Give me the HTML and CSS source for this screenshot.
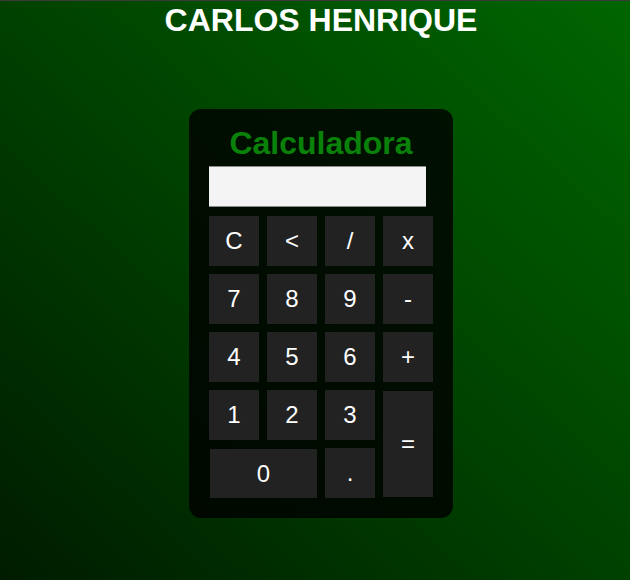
FILE: index.html
```html
<!DOCTYPE html>
<html>
<head>
<meta charset="utf-8">
<link rel="stylesheet" href="styles.css">
</head>
<body>
<h1 class="title">CARLOS HENRIQUE</h1>
<div class="calc">
  <h2 class="calc-title">Calculadora</h2>
  <div class="display"></div>
  <div class="keys">
    <button class="key">C</button>
    <button class="key">&lt;</button>
    <button class="key">/</button>
    <button class="key">x</button>
    <button class="key">7</button>
    <button class="key">8</button>
    <button class="key">9</button>
    <button class="key">-</button>
    <button class="key">4</button>
    <button class="key">5</button>
    <button class="key">6</button>
    <button class="key">+</button>
    <button class="key">1</button>
    <button class="key">2</button>
    <button class="key">3</button>
    <button class="key key-eq">=</button>
    <button class="key key-zero">0</button>
    <button class="key">.</button>
  </div>
</div>
</body>
</html>
```
FILE: styles.css
```css
html, body {
  margin: 0;
  padding: 0;
  height: 100%;
}
body {
  border-top: 1px solid #3a3a3a;
  box-sizing: border-box;
  background: linear-gradient(to top right, #001c00, #006600);
  font-family: "Liberation Sans", Arial, sans-serif;
  padding-left: 12px;
  display: flex;
  flex-direction: column;
  align-items: center;
}
.title {
  margin: 1px 0 0;
  font-size: 32px;
  font-weight: bold;
  color: #fff;
  line-height: 37px;
}
.calc {
  margin-top: 70px;
  width: 264px;
  box-sizing: border-box;
  padding: 16px 20px 20px;
  background: rgba(0, 0, 0, 0.8);
  border-radius: 12px;
  display: flex;
  flex-direction: column;
}
.calc-title {
  margin: 0;
  text-align: center;
  font-size: 32px;
  line-height: 37px;
  color: #0a820a;
  font-weight: bold;
}
.display {
  margin-top: 4px;
  width: 217px;
  height: 39px;
  background: #f4f4f4;
  border-top: 1px solid #8a8a8a;
  border-bottom: 1px solid #8a8a8a;
}
.keys {
  margin-top: 9px;
  display: grid;
  grid-template-columns: repeat(4, 50px);
  grid-auto-rows: 50px;
  gap: 8px;
}
.key {
  border: none;
  margin: 0;
  padding: 0;
  background: #222222;
  color: #fff;
  font-family: "Liberation Sans", Arial, sans-serif;
  font-size: 24px;
}
.key-eq {
  grid-row: span 2;
  margin: 1px 0 1px;
}
.key-zero {
  grid-column: span 2;
  margin: 1px 0 0 1px;
}
```
